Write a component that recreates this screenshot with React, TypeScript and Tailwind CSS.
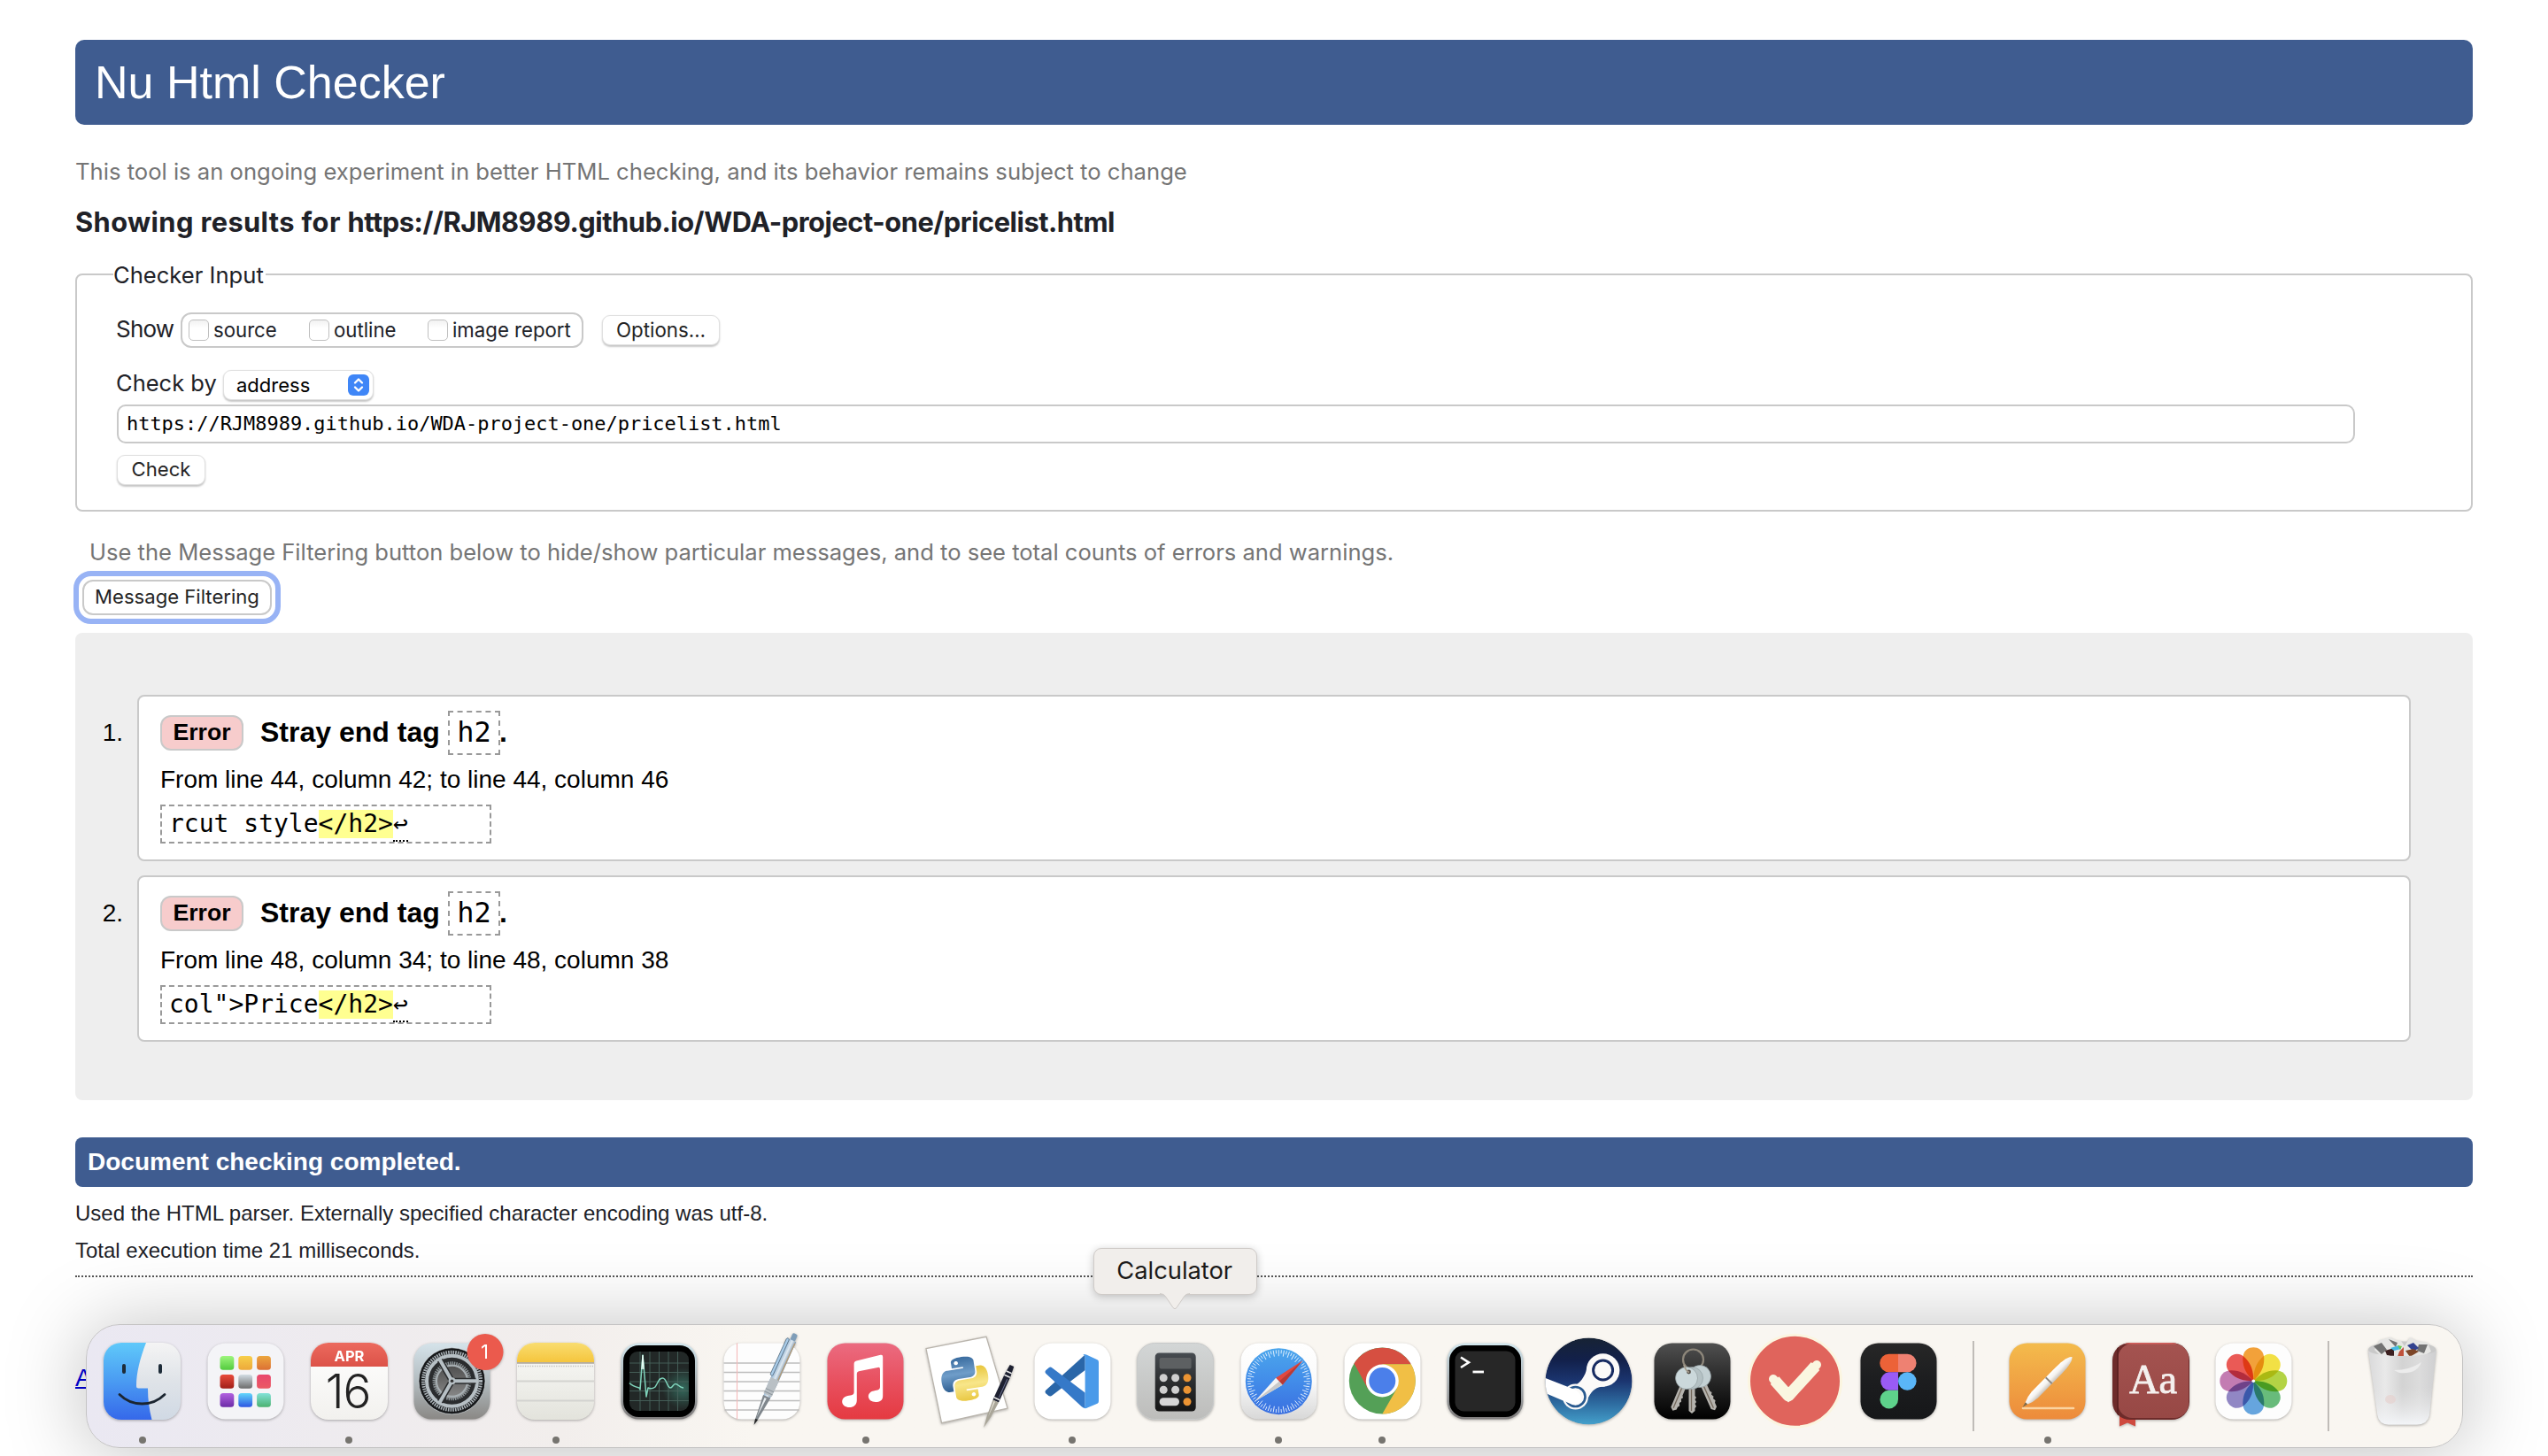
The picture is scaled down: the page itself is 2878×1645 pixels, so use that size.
import type { ReactNode } from "react";

const PYTHON_SNAKE =
  "M14.25.18l.9.2.73.26.59.3.45.32.34.34.25.34.16.33.1.3.04.26.02.2-.01.13V8.5l-.05.63-.13.55-.21.46-.26.38-.3.31-.33.25-.35.19-.35.14-.33.1-.3.07-.26.04-.21.02H8.77l-.69.05-.59.14-.5.22-.41.27-.33.32-.27.35-.2.36-.15.37-.1.35-.07.32-.04.27-.02.21v3.06H3.17l-.21-.03-.28-.07-.32-.12-.35-.18-.36-.26-.36-.36-.35-.46-.32-.59-.28-.73-.21-.88-.14-1.05-.05-1.23.06-1.22.16-1.04.24-.87.32-.71.36-.57.4-.44.42-.33.42-.24.4-.16.36-.1.32-.05.24-.01h.16l.06.01h8.16v-.83H6.18l-.01-2.75-.02-.37.05-.34.11-.31.17-.28.25-.26.31-.23.38-.2.44-.18.51-.15.58-.12.64-.1.71-.06.77-.04.84-.02 1.27.05zm-6.3 1.98l-.23.33-.08.41.08.41.23.34.33.22.41.09.41-.09.33-.22.23-.34.08-.41-.08-.41-.23-.33-.33-.22-.41-.09-.41.09z";

function Gradient({ id, stops, x2 = 0, y2 = 1 }: { id: string; stops: string[]; x2?: number; y2?: number }) {
  return (
    <linearGradient id={id} x1="0" y1="0" x2={x2} y2={y2}>
      {stops.map((c, i) => (
        <stop key={i} offset={i / (stops.length - 1)} stopColor={c} />
      ))}
    </linearGradient>
  );
}

function Tile({ fill, stroke = "none" }: { fill: string; stroke?: string }) {
  return <rect x="0.5" y="0.5" width="86" height="86" rx="20" fill={fill} stroke={stroke} />;
}

function Art({ children }: { children: ReactNode }) {
  return (
    <svg width="87" height="87" viewBox="0 0 87 87" className="block overflow-visible drop-shadow-[0_1px_1.5px_rgba(0,0,0,0.3)]">
      {children}
    </svg>
  );
}

function Finder() {
  return (
    <Art>
      <defs>
        <Gradient id="finder-blue" stops={["#5fc9fa", "#4a9bf2", "#3568ea"]} />
        <Gradient id="finder-gray" stops={["#f4f4f4", "#dfe3e8", "#d0d9e4"]} />
        <clipPath id="finder-clip"><rect width="87" height="87" rx="20" /></clipPath>
      </defs>
      <g clipPath="url(#finder-clip)">
        <rect width="87" height="87" fill="url(#finder-gray)" />
        <path d="M0 0H48C41 18 37 34 37 49Q37 51.500 39.500 51.500H50Q50 70 54.500 87H0Z" fill="url(#finder-blue)" />
      </g>
      <path d="M23 26v7M64 26v7" stroke="#1d2b38" strokeWidth="4" strokeLinecap="round" />
      <path d="M18 58.500C32 72.500 55 72.500 69 58.500" fill="none" stroke="#1b2530" strokeWidth="2.800" strokeLinecap="round" />
    </Art>
  );
}

const LAUNCHPAD_COLORS = [
  ["#9df57d", "#53cb3e"], ["#f7cf4a", "#eda93a"], ["#eca63d", "#dc7034"],
  ["#e94b3c", "#a01f18"], ["#d3dde4", "#6b6b6b"], ["#e9466c", "#ea5a64"],
  ["#b261e0", "#6c2ba6"], ["#62d6fb", "#2d55e2"], ["#82e2d8", "#4bb16f"],
];

function Launchpad() {
  return (
    <Art>
      <defs>
        {LAUNCHPAD_COLORS.map((c, i) => <Gradient key={i} id={`pad-${i}`} stops={c} />)}
      </defs>
      <Tile fill="#f4f4f7" />
      {LAUNCHPAD_COLORS.map((_, i) => (
        <rect key={i} x={14.500 + (i % 3) * 20.800} y={15 + Math.floor(i / 3) * 21} width="15.800" height="15.800" rx="3.500" fill={`url(#pad-${i})`} />
      ))}
    </Art>
  );
}

function Calendar() {
  return (
    <Art>
      <defs>
        <clipPath id="cal-clip"><rect width="87" height="87" rx="20" /></clipPath>
        <Gradient id="cal-red" stops={["#ec6a5e", "#dc5248"]} />
        <Gradient id="cal-white" stops={["#ffffff", "#f2f1ee"]} />
      </defs>
      <g clipPath="url(#cal-clip)">
        <rect width="87" height="87" fill="url(#cal-white)" />
        <rect width="87" height="27" fill="url(#cal-red)" />
      </g>
      <text x="43.500" y="21" textAnchor="middle" fontFamily="Inter, sans-serif" fontSize="16.500" fontWeight="700" fill="#fff">APR</text>
      <text x="42" y="74" textAnchor="middle" fontFamily="Inter, sans-serif" fontSize="53" fontWeight="300" letterSpacing="-1" fill="#222">16</text>
    </Art>
  );
}

function Settings() {
  return (
    <Art>
      <defs>
        <Gradient id="set-bg" stops={["#d5e3ea", "#b3bcc0", "#8a8885"]} />
        <Gradient id="set-hub" stops={["#4a4a4a", "#8b8b8b"]} />
      </defs>
      <Tile fill="url(#set-bg)" />
      <g transform="translate(43.500 43.300)" fill="none">
        <circle r="37.500" fill="#17191b" stroke="#dfe6ea" strokeWidth="0.600" />
        <circle r="32.500" stroke="#aab2b7" strokeWidth="4" strokeDasharray="1.600 1.100" />
        <circle r="28.500" stroke="#b6bfc4" strokeWidth="4" fill="#2a2c2e" />
        <circle r="20" stroke="#8d9599" strokeWidth="4" strokeDasharray="1.400 1" fill="url(#set-hub)" />
        <circle r="17.500" stroke="#a7afb3" strokeWidth="2" />
        <path d="M0 0H27M0 0L-13.500 -23.500M0 0L-13.500 23.500" stroke="#2a2c2e" strokeWidth="7" />
        <path d="M0 0H28M0 0L-14 -24.500M0 0L-14 24.500" stroke="#b6bfc4" strokeWidth="4" />
        <circle r="4" fill="#b6bfc4" />
        <circle r="1.800" fill="#333" />
      </g>
      <circle cx="81" cy="10.500" r="20.500" fill="#eb5a4d" />
      <text x="80.500" y="18" textAnchor="middle" fontFamily="Inter, sans-serif" fontSize="22" fill="#fff">1</text>
    </Art>
  );
}

function Notes() {
  return (
    <Art>
      <defs>
        <clipPath id="notes-clip"><rect width="87" height="87" rx="20" /></clipPath>
        <Gradient id="notes-top" stops={["#f9dd70", "#f5c53d"]} />
        <Gradient id="notes-paper" stops={["#fbfbf9", "#e3e3dc"]} />
      </defs>
      <g clipPath="url(#notes-clip)">
        <rect width="87" height="87" fill="url(#notes-paper)" />
        <rect width="87" height="22" fill="url(#notes-top)" />
        <rect y="22" width="87" height="1.800" fill="#b3aca0" />
        <path d="M1 26.500H87" stroke="#bdbdba" strokeWidth="1.600" strokeDasharray="1.200 1.500" />
        <path d="M0 43.500H87M0 65.500H87" stroke="#d3d3d0" strokeWidth="1.800" />
      </g>
    </Art>
  );
}

function SteelFrame() {
  return (
    <>
      <defs><Gradient id="steel" stops={["#d3e8ef", "#a8b0b4", "#7e7b7b"]} /></defs>
      <Tile fill="url(#steel)" />
      <rect x="3" y="3" width="81" height="81" rx="17.500" fill="#000" />
    </>
  );
}

function ActivityMonitor() {
  return (
    <Art>
      <SteelFrame />
      <defs>
        <radialGradient id="act-glow" cx="0.900" cy="0.620" r="0.350">
          <stop offset="0" stopColor="#34695c" />
          <stop offset="1" stopColor="#222827" />
        </radialGradient>
      </defs>
      <rect x="10" y="10" width="67" height="67" rx="9" fill="url(#act-glow)" />
      <path d="M22 10V77M33 10V77M43.500 10V77M54 10V77M64.500 10V77M10 23H77M10 33.500H77M10 44H77M10 54.500H77M10 65.500H77" stroke="#47625b" strokeWidth="0.900" />
      <path d="M10 45.500C13 49 17 50 21 51L22 53L25 14L29 61L31 51Q35 53 39 50C43 44 43 40 47.500 40C52 40 52 50 56 51C59 51 59 46.500 62 46.500C65 46.500 66 51 71 51" fill="none" stroke="#7fd3bb" strokeWidth="1.500" strokeLinejoin="round" />
      <path d="M24 30L25 14L26 30" fill="none" stroke="#e9fff7" strokeWidth="1.400" />
    </Art>
  );
}

function TextEdit() {
  return (
    <Art>
      <defs><Gradient id="te-pen" x2={1} y2={0} stops={["#8fb1d0", "#dfe9f1", "#7b94ab"]} /></defs>
      <Tile fill="#fdfdfd" />
      <path d="M0.500 23H86.500M0.500 33.500H86.500M0.500 44H86.500M0.500 54.500H86.500M0.500 65.500H86.500M1.500 76H85.500" stroke="#bdbdbd" strokeWidth="1.300" />
      <path d="M15.500 0.500V86.500" stroke="#f4b9b9" strokeWidth="1.100" />
      <g transform="translate(81.500 -10) rotate(24.500)">
        <rect x="-3" y="0" width="6" height="9" rx="2" fill="#7f9db8" />
        <path d="M-4.500 8H4.500L5 62L4 80H-4L-5 62Z" fill="url(#te-pen)" />
        <path d="M3.800 10V58" stroke="#b69a72" strokeWidth="1.200" />
        <path d="M-5 56H5V76H-5Z" fill="#b9c0c5" />
        <path d="M-5 70H5M-5 73.500H5" stroke="#8d969c" strokeWidth="1" />
        <path d="M-4.500 78H4.500L1.500 106L0 113L-1.500 106Z" fill="#7f868c" />
        <path d="M-2 80L-0.800 104L0.500 80Z" fill="#e8edf0" />
        <path d="M-1.600 106H1.600L0 113Z" fill="#222" />
        <rect x="-7" y="8" width="3.200" height="46" rx="1.500" fill="#a8cbe8" stroke="#4f6577" strokeWidth="0.700" />
      </g>
    </Art>
  );
}

function Music() {
  return (
    <Art>
      <defs><Gradient id="music-bg" stops={["#eb6b80", "#e8505f", "#e53a41"]} /></defs>
      <Tile fill="url(#music-bg)" />
      <path d="M30.600 24Q30.600 21.200 33.300 20.500L60.500 13.800Q63.200 13.200 63.200 16V60C63.200 65.500 59.500 67 55 67C46 67 44 57.500 51.500 54.800C55.500 53.500 60 54 60 50V30Q60 27.300 57.500 27.900L36 32.300Q33.800 32.800 33.800 35V65C33.800 70.500 30 73 25.500 73C16 73 14.500 63 22 60.500C26 59.200 30.600 60 30.600 56Z" fill="#fff" />
    </Art>
  );
}

function Idle() {
  return (
    <Art>
      <defs>
        <Gradient id="py-blue" stops={["#3a6c9f", "#6f9dc9", "#2f5f92"]} />
        <Gradient id="py-yellow" stops={["#e9c843", "#f8e68a", "#e8c53c"]} />
      </defs>
      <path d="M-5 6.700L63 -6.700L87 74L12.600 90.700Z" fill="#fff" stroke="#b9b4ac" strokeWidth="1.200" />
      <g transform="translate(38.800 40.700) rotate(-9) scale(2.200 2.080) translate(-12 -12)">
        <path d={PYTHON_SNAKE} fill="url(#py-blue)" />
        <path d={PYTHON_SNAKE} fill="url(#py-yellow)" transform="rotate(180 12 12)" />
      </g>
      <g transform="translate(92 26) rotate(24.500)">
        <path d="M-2.500 0H2.500L3.600 12V44H-3.600V12Z" fill="#1d2030" />
        <path d="M-3.300 8H3.300M-3.600 13H3.600M-3.600 41H3.600" stroke="#e8e8e8" strokeWidth="1.600" />
        <path d="M1.500 16V39" stroke="#6b7190" strokeWidth="1" />
        <path d="M-3.600 44H3.600L2.400 62L0 77L-2.400 62Z" fill="#a9a598" />
        <path d="M-2 45L-0.500 64V45Z" fill="#e8e5da" />
      </g>
    </Art>
  );
}

function VSCode() {
  return (
    <Art>
      <Tile fill="#fff" />
      <path d="M13.500 53.500Q11.500 55.500 13.500 57.500L16.500 60Q18.500 61 20.500 59.500L57.600 31V13.500Z" fill="#2a66a8" />
      <path d="M13.500 35Q11.500 33 13.500 31L17 28Q18.500 27 20.500 28.500L57.600 56.500V74Q55 73.500 53.500 72Z" fill="#3579c8" />
      <path d="M57.600 13Q56.500 13 59 13.500L71.500 19.300Q73 20 73 22V66Q73 68 71.500 68.700L59 74Q56.500 74.500 55 73Q57.600 74 57.600 70.500V16.500Q57.600 13 55 14Q56.500 12.500 57.600 13Z" fill="#4a9ae9" />
    </Art>
  );
}

function Calculator() {
  return (
    <Art>
      <defs>
        <Gradient id="calc-bg" stops={["#d3d6d6", "#bdbdbb"]} />
        <Gradient id="calc-body" stops={["#474c51", "#2b2d2f", "#161616"]} />
      </defs>
      <Tile fill="url(#calc-bg)" stroke="#c8caca" />
      <rect x="20.700" y="11.500" width="46" height="66" rx="4.500" fill="url(#calc-body)" />
      <rect x="25.600" y="17" width="36" height="12.500" rx="2" fill="#5d6062" />
      {[39.700, 53.200].map((y) => (
        <g key={y}>
          <circle cx="30.200" cy={y} r="4.500" fill="#cfcfcf" />
          <circle cx="43.600" cy={y} r="4.500" fill="#cfcfcf" />
          <circle cx="57" cy={y} r="4.500" fill="#ec9433" />
        </g>
      ))}
      <rect x="25.600" y="62.200" width="22.400" height="9" rx="4.500" fill="#d6d6d6" />
      <circle cx="57" cy="66.700" r="4.500" fill="#ec9433" />
    </Art>
  );
}

function Safari() {
  return (
    <Art>
      <defs>
        <Gradient id="saf-bg" stops={["#ffffff", "#fafafa", "#d8d8d8"]} />
        <Gradient id="saf-dial" stops={["#4ba6ec", "#428ce9", "#3a6fe0"]} />
      </defs>
      <Tile fill="url(#saf-bg)" />
      <g transform="translate(43.300 43.700)">
        <circle r="37.500" fill="url(#saf-dial)" />
        {Array.from({ length: 72 }, (_, i) => (
          <path key={i} d={i % 2 ? "M0 -35.500V-31.500" : "M0 -35.500V-28.500"} stroke="#e3f0fd" strokeWidth="0.900" transform={`rotate(${i * 5})`} />
        ))}
        <path d="M27 -23.500L-3.200 -4L4.200 4Z" fill="#e2483f" />
        <path d="M27 -23.500L4.200 4L0.500 0Z" fill="#b93a36" />
        <path d="M-27 22.500L-3.200 -4L4.200 4Z" fill="#f4f4f4" />
        <path d="M-27 22.500L4.200 4L0.500 0Z" fill="#c9c9c9" />
      </g>
    </Art>
  );
}

function Chrome() {
  return (
    <Art>
      <Tile fill="#fff" />
      <g transform="translate(43.300 43)">
        <circle r="37.500" fill="#54a057" />
        <path d="M-31.800 -19.500A37.500 37.500 0 0 1 32.500 -18.700H0L-16.200 9.300Z" fill="#d64f41" />
        <path d="M32.500 -18.700A37.500 37.500 0 0 1 0 37.500L16.200 9.300L0 -18.700Z" fill="#f1bf45" />
        <circle r="18.500" fill="#fff" />
        <circle r="15" fill="#4b7fea" />
      </g>
    </Art>
  );
}

function Terminal() {
  return (
    <Art>
      <SteelFrame />
      <rect x="9.500" y="9.500" width="68" height="68" rx="10" fill="#272727" />
      <path d="M16 16.500L25 22.300L16 28" fill="none" stroke="#fff" strokeWidth="2.600" />
      <path d="M29.500 33H42" stroke="#fff" strokeWidth="2.800" />
    </Art>
  );
}

function Steam() {
  return (
    <Art>
      <defs>
        <Gradient id="steam-bg" stops={["#172334", "#12204a", "#1b3570", "#2d6a9f", "#44a0cb"]} />
        <clipPath id="steam-clip"><circle cx="43.500" cy="43.500" r="49" /></clipPath>
      </defs>
      <g clipPath="url(#steam-clip)">
        <circle cx="43.500" cy="43.500" r="49" fill="url(#steam-bg)" />
        <path d="M41.500 27.500C40.500 38 32 47 27.500 48.500L43 62C47 54 52 49.500 62 49.500Z" fill="#fbfaf9" />
        <circle cx="59.600" cy="31" r="18.800" fill="#fbfaf9" />
        <circle cx="59.600" cy="31" r="11" fill="#fbfaf9" stroke="#182c63" strokeWidth="3" />
        <circle cx="28.500" cy="61" r="14.500" fill="#fbfaf9" />
        <circle cx="28.500" cy="61" r="11" fill="none" stroke="#28598f" strokeWidth="2.600" />
        <path d="M-8 39L24 51.500Q36 56 35 64Q32 72 24 69.500L-8 56Z" fill="#fff" />
      </g>
    </Art>
  );
}

function KeyShape({ angle, x, y, fill, length = 42 }: { angle: number; x: number; y: number; fill: string; length?: number }) {
  return (
    <g transform={`translate(${x} ${y}) rotate(${angle})`}>
      <path d={`M-3.500 8H3.500V20l1.500 2l-1.500 2l1.500 3l-1.500 2l1.500 3l-1.500 2V${length - 3}L0 ${length}L-3.500 ${length - 3}Z`} fill="#b5b3ae" />
      <path d={`M-0.500 10V${length - 3}`} stroke="#73685c" strokeWidth="1.300" />
      <circle r="12.500" fill={fill} stroke="#8f9a9d" strokeWidth="0.600" />
    </g>
  );
}

function Keychain() {
  return (
    <Art>
      <defs><Gradient id="key-bg" stops={["#505050", "#262626", "#000000"]} /></defs>
      <Tile fill="url(#key-bg)" />
      <circle cx="44.500" cy="19" r="11.500" fill="none" stroke="#8d867a" strokeWidth="2.200" />
      <KeyShape angle={-24} x={52} y={38} fill="#c3d0d3" />
      <KeyShape angle={0} x={43} y={40} fill="#b4c1c4" length={40} />
      <KeyShape angle={23} x={37} y={40} fill="#cbd8db" length={40} />
      <circle cx="39.500" cy="33" r="2.400" fill="#55504a" />
      <path d="M34 25Q36 32 40 33.500" fill="none" stroke="#a59d8f" strokeWidth="1.800" />
    </Art>
  );
}

function CheckBadge() {
  return (
    <svg width="87" height="87" viewBox="0 0 87 87" className="block overflow-visible">
      <circle cx="43.500" cy="43.300" r="52" fill="#e0645c" stroke="#fbf5e0" strokeWidth="3" />
      <path d="M20.500 42.500L36 60L66.500 26.500" fill="none" stroke="#faf6e0" strokeWidth="13" strokeLinejoin="round" />
      <path d="M19 41L36 60L68 25" fill="none" stroke="#faf6e0" strokeWidth="10" strokeLinecap="round" />
    </svg>
  );
}

function Figma() {
  return (
    <Art>
      <defs><Gradient id="fig-bg" stops={["#272727", "#1c1d1f", "#161719"]} /></defs>
      <Tile fill="url(#fig-bg)" />
      <path d="M43 12.700H32.500A10.300 10.300 0 0 0 32.500 33.300H43Z" fill="#ec6238" />
      <path d="M43 12.700H53.300A10.300 10.300 0 0 1 53.300 33.300H43Z" fill="#ee8172" />
      <path d="M43 33.300H32.500A10.300 10.300 0 0 0 32.500 53.800H43Z" fill="#9a5bf5" />
      <circle cx="53.300" cy="43.500" r="10.300" fill="#5ab6f8" />
      <path d="M43 53.800H32.500A10.300 10.300 0 1 0 43 64Z" fill="#5ed28b" />
    </Art>
  );
}

function Pages() {
  return (
    <Art>
      <defs>
        <Gradient id="pages-bg" stops={["#f4bb4c", "#f0a344", "#ed8b3b"]} />
        <Gradient id="pages-pen" x2={1} y2={0} stops={["#ffffff", "#f5f3f0", "#c9c3bc"]} />
      </defs>
      <Tile fill="url(#pages-bg)" />
      <path d="M16 74H73" stroke="#fbd3a0" strokeWidth="2.600" strokeLinecap="round" />
      <g transform="translate(71.500 16) rotate(44.500)">
        <path d="M0 0C4.500 4 5 14 5 26V60Q4.500 68 1.500 74H-1.500Q-4.500 68 -5 60V26C-5 14 -4.500 4 0 0Z" fill="url(#pages-pen)" />
        <path d="M-5 37.500H5" stroke="#8c8781" strokeWidth="1.800" />
        <path d="M-1.600 73.500H1.600L0 80Z" fill="#7c6a4c" />
      </g>
    </Art>
  );
}

function Dictionary() {
  return (
    <Art>
      <defs>
        <Gradient id="dict-bg" stops={["#a45350", "#974845"]} />
        <clipPath id="dict-clip"><rect width="87" height="87" rx="20" /></clipPath>
      </defs>
      <path d="M8 80H26V94.500L17 90.500L8 94.500Z" fill="#cf4a3f" />
      <g clipPath="url(#dict-clip)">
        <rect width="87" height="87" fill="#6d2b2a" />
        <rect x="6.500" y="1" width="79.500" height="84" rx="16" fill="url(#dict-bg)" />
        <path d="M6 5V82" stroke="#571f1f" strokeWidth="1.500" />
        <path d="M14 0.800H72" stroke="#d6605c" strokeWidth="1.400" />
      </g>
      <text x="46" y="57" textAnchor="middle" fontFamily="'Liberation Serif', serif" fontSize="46.500" fill="#f4f0ee" stroke="#f4f0ee" strokeWidth="0.800">Aa</text>
    </Art>
  );
}

const PETALS = ["#f2a13a", "#f2e045", "#b3d345", "#68bb7b", "#66a5de", "#9187c4", "#c37cb2", "#ea5a56"];

function Photos() {
  return (
    <Art>
      <Tile fill="#fdfdfd" />
      <g transform="translate(43.300 43.300)" className="isolate">
        {PETALS.map((c, i) => (
          <path key={c} d="M0 0C-8 -8 -12 -15 -12 -25C-12 -33 -7 -38 0 -38C7 -38 12 -33 12 -25C12 -15 8 -8 0 0Z" fill={c} transform={`rotate(${i * 45})`} className="mix-blend-multiply" />
        ))}
        <circle r="1.800" fill="#fff" />
      </g>
    </Art>
  );
}

function Trash() {
  return (
    <Art>
      <defs>
        <Gradient id="bin" x2={1} y2={0} stops={["#d9d9da", "#e9e9e9", "#d3d3d3", "#dcdcdc", "#cfcfd1"]} />
        <Gradient id="bin-base" stops={["#e4e4e400", "#e4e4e400", "#f3f5f8"]} />
      </defs>
      <ellipse cx="43.300" cy="8" rx="38.300" ry="9.500" fill="#c9c9c9" />
      <path d="M12 8L18 -3L30 -6L36 -3L42 -2L46 4L52 -6L60 -2L72 0L76 10L66 16H20Z" fill="#e6e6e4" />
      <path d="M11 4L20 0L26 8L20 13ZM28 -4L38 0L36 5ZM62 2L72 2L68 12L60 9Z" fill="#737373" />
      <path d="M24 9L34 6L34 16L26 14Z" fill="#3c2020" />
      <path d="M30 6L40 3L42 7L34 9Z" fill="#43b9e4" />
      <path d="M38 3L43 4L41 8Z" fill="#6acb4c" />
      <path d="M40 10L45 5L45 16L38 16Z" fill="#c0523b" />
      <path d="M49 3L56 0L62 6L56 10Z" fill="#32428f" />
      <path d="M47 9L56 7L62 10L52 16Z" fill="#7d4628" />
      <path d="M5 9C12 17 74 17 81.700 9L74 82Q72 92 60 92.500H28Q17 92 15.500 82Z" fill="url(#bin)" />
      <path d="M5 9C12 17 74 17 81.700 9L74 82Q72 92 60 92.500H28Q17 92 15.500 82Z" fill="url(#bin-base)" />
      <path d="M34 31Q52 31 65 22Q60 36 40 34Z" fill="#ececec" />
      <ellipse cx="30" cy="64" rx="6" ry="5" fill="#e6cfcb" opacity="0.600" />
    </Art>
  );
}

function DockItem({ children, running = false, label }: { children: ReactNode; running?: boolean; label?: string }) {
  return (
    <div className="relative flex w-[116.7px] flex-col items-center pt-[20px]">
      {children}
      {running && <span className="mt-[19px] size-2 rounded-full bg-[#76746f]" />}
      {label && (
        <div className="absolute -top-[87px] flex h-[53px] w-[185px] items-center justify-center rounded-[9px] border border-[#cfcbc8] bg-[#f1eeeb] pr-0.5 pb-px font-['Inter',sans-serif] text-[27.3px] text-[#1c1a19] shadow-[0_2px_10px_rgba(0,0,0,0.22)]">
          {label}
          <svg width="34" height="19" viewBox="0 0 34 19" className="absolute -bottom-[18px] left-[74px]">
            <path d="M0 0H34C29 1 28 3 26 6L19 16.500Q17 19 15 16.500L8 6C6 3 5 1 0 0Z" fill="#f1eeeb" />
            <path d="M0 0.500C5 1 6 3 8 6L15 16.500Q17 19 19 16.500L26 6C28 3 29 1 34 0.500" fill="none" stroke="#cfcbc8" />
          </svg>
        </div>
      )}
    </div>
  );
}

function DockDivider() {
  return (
    <div className="flex w-[51.3px] justify-center pt-[18px]">
      <span className="h-[102px] w-0.5 bg-[#c0bcb8]" />
    </div>
  );
}

function Dock() {
  return (
    <div className="absolute top-[1496px] left-[97px] flex h-[140px] w-[2685px] rounded-[38px] border border-[#c4c3c3] bg-linear-to-r from-[#eae8f2] from-0% via-[#f2eeec] via-20% to-[#f9f6f1] to-28% pl-[4.5px] shadow-[0_4px_90px_rgba(0,0,0,0.26)]">
      <DockItem running><Finder /></DockItem>
      <DockItem><Launchpad /></DockItem>
      <DockItem running><Calendar /></DockItem>
      <DockItem><Settings /></DockItem>
      <DockItem running><Notes /></DockItem>
      <DockItem><ActivityMonitor /></DockItem>
      <DockItem><TextEdit /></DockItem>
      <DockItem running><Music /></DockItem>
      <DockItem><Idle /></DockItem>
      <DockItem running><VSCode /></DockItem>
      <DockItem label="Calculator"><Calculator /></DockItem>
      <DockItem running><Safari /></DockItem>
      <DockItem running><Chrome /></DockItem>
      <DockItem><Terminal /></DockItem>
      <DockItem><Steam /></DockItem>
      <DockItem><Keychain /></DockItem>
      <DockItem><CheckBadge /></DockItem>
      <DockItem><Figma /></DockItem>
      <DockDivider />
      <DockItem running><Pages /></DockItem>
      <DockItem><Dictionary /></DockItem>
      <DockItem><Photos /></DockItem>
      <DockDivider />
      <DockItem><Trash /></DockItem>
    </div>
  );
}

function CheckOption({ label, className }: { label: string; className: string }) {
  return (
    <label className={`flex items-center gap-[5px] ${className}`}>
      <span className="h-6 w-[23px] shrink-0 rounded-[5px] border-[1.5px] border-[#bfbfbf] bg-linear-to-b from-[#f2f2f2] to-white to-40%" />
      {label}
    </label>
  );
}

const BUTTON =
  "flex items-center justify-center rounded-[9px] border border-[#e0e0e0] bg-white text-[#242424] shadow-[0_1.5px_2px_rgba(0,0,0,0.22)]";

function CheckerInput() {
  return (
    <div className="mt-[38px] h-[269px] rounded-[8px] border-2 border-[#c9c9c9]">
      <div className="-mt-4 ml-[41px] h-8 w-fit bg-white pr-0.5 text-[25.6px] leading-8">Checker Input</div>
      <div className="mt-[26px] ml-11 flex h-10 items-center">
        <span className="w-[73px] pb-[3px] text-[26px] tracking-[-0.8px]">Show</span>
        <div className="flex h-10 w-[455px] items-center rounded-[12px] border-2 border-[#c9c9c9] pl-[7px] text-[22.2px]">
          <CheckOption label="source" className="w-[136px]" />
          <CheckOption label="outline" className="w-[134px]" />
          <CheckOption label="image report" className="" />
        </div>
        <button className={`ml-[21px] h-[34px] w-[133px] text-[22.3px] ${BUTTON}`}>Options…</button>
      </div>
      <div className="mt-[25px] ml-11 flex h-[34px] items-center">
        <span className="w-[121px] pb-[3px] text-[25.5px]">Check by</span>
        <div className="flex h-[34px] w-[170px] items-center justify-between rounded-[9px] border border-[#e0e0e0] bg-white pr-[4px] pl-[14px] text-[22px] text-black shadow-[0_1.5px_2px_rgba(0,0,0,0.22)]">
          address
          <svg width="24" height="24" viewBox="0 0 24 24">
            <rect width="24" height="24" rx="6" fill="#3f86f7" />
            <path d="M8 9.500L12 5.500L16 9.500M8 14.500L12 18.500L16 14.500" fill="none" stroke="#fff" strokeWidth="2.300" strokeLinecap="round" strokeLinejoin="round" />
          </svg>
        </div>
      </div>
      <div className="mt-[5px] ml-[45px] flex h-11 w-[2528px] items-center rounded-[10px] border-2 border-[#c9c9c9] pl-[9px] font-['DejaVu_Sans_Mono',monospace] text-[21.95px] text-black">
        https://RJM8989.github.io/WDA-project-one/pricelist.html
      </div>
      <button className={`mt-[13px] ml-[45px] h-[34px] w-[100px] text-[22.1px] ${BUTTON}`}>Check</button>
    </div>
  );
}

function Message({ index, location, before, tag }: { index: number; location: string; before: string; tag: string }) {
  return (
    <li className="flex font-['Liberation_Sans',Arial,sans-serif] text-black">
      <span className="w-[70px] pt-[27px] pr-4 text-right text-[28px] leading-8">{index}.</span>
      <div className="h-[188px] flex-1 rounded-[8px] border-2 border-[#c9c9c9] bg-white pt-4 pl-6">
        <div className="flex h-[50px] items-center">
          <span className="flex h-10 w-[94px] items-center justify-center rounded-[12px] border-2 border-[#c9c9c9] bg-[#f7cccc] text-[26.6px] font-bold">
            Error
          </span>
          <span className="ml-[19px] w-[212px] pb-0.5 text-[32px] font-bold whitespace-nowrap">Stray end tag</span>
          <code className="flex h-[50px] w-[59px] items-center justify-center border-2 border-dashed border-[#999] pb-0.5 font-['DejaVu_Sans_Mono',monospace] text-[32px]">
            h2
          </code>
          <span className="-ml-px pb-0.5 text-[32px] font-bold">.</span>
        </div>
        <p className="mt-3 text-[28px] leading-8">{location}</p>
        <div className="mt-3 flex h-11 w-[374px] items-center border-2 border-dashed border-[#999] pl-2 font-['DejaVu_Sans_Mono',monospace] text-[28px] whitespace-pre">
          {before}
          <mark className="h-8 bg-[#ffff91] leading-8 text-black">{tag}</mark>
          <span className="mt-[1px] flex h-[38px] w-[17px] items-center border-b-2 border-dotted border-black">↩</span>
        </div>
      </div>
    </li>
  );
}

export default function App() {
  return (
    <div className="relative h-[1645px] w-[2878px] overflow-hidden bg-white px-[85px] font-['Inter',sans-serif] text-[#202127]">
      <h1 className="mt-[45px] flex h-24 items-center rounded-[10px] bg-[#3f5c90] pl-[22px] font-['Liberation_Sans',Arial,sans-serif] text-[52px] text-white">
        Nu Html Checker
      </h1>
      <p className="mt-[33px] text-[25.63px] leading-10 text-[#757575]">
        This tool is an ongoing experiment in better HTML checking, and its behavior remains subject to change
      </p>
      <h2 className="mt-[17px] text-[30.8px] leading-10 font-bold tracking-[-0.45px]">
        <span className="tracking-[0.4px]">Showing results for </span>
        https://RJM8989.github.io/WDA-project-one/pricelist.html
      </h2>
      <CheckerInput />
      <p className="mt-[30px] ml-4 text-[25.57px] leading-8 text-[#757575]">
        Use the Message Filtering button below to hide/show particular messages, and to see total counts of errors and warnings.
      </p>
      <div className="mt-[5px] -ml-[2px] flex h-[60px] w-[234px] items-center justify-center rounded-[20px] border-[6px] border-[#98b3f5] bg-white">
        <button className="h-10 w-[214px] rounded-[12px] border-2 border-[#c9c9c9] text-[22.1px] text-[#242424]">Message Filtering</button>
      </div>
      <ol className="mt-[10px] flex h-[528px] flex-col gap-4 rounded-[8px] bg-[#eeeeee] pt-[70px] pr-[70px]">
        <Message index={1} location="From line 44, column 42; to line 44, column 46" before="rcut style" tag="</h2>" />
        <Message index={2} location="From line 48, column 34; to line 48, column 38" before={'col">Price'} tag="</h2>" />
      </ol>
      <div className="font-['Liberation_Sans',Arial,sans-serif]">
        <p className="mt-[42px] flex h-14 items-center rounded-[8px] bg-[#3f5c90] pl-[14px] text-[28px] font-bold text-white">
          Document checking completed.
        </p>
        <p className="mt-4 text-2xl leading-7">Used the HTML parser. Externally specified character encoding was utf-8.</p>
        <p className="mt-[14px] text-2xl leading-7">Total execution time 21 milliseconds.</p>
        <hr className="mt-[14px] border-t-2 border-dotted border-[#555]" />
        <a className="mt-[94px] block w-fit text-[28px] leading-10 text-[#0000d8] underline decoration-2">A</a>
      </div>
      <Dock />
    </div>
  );
}
